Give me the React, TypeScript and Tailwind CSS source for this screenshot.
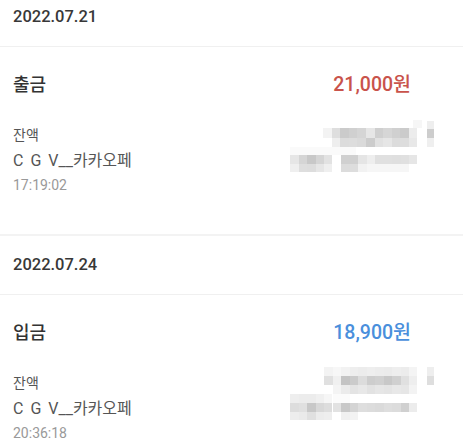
import React from "react";

const FONT = { fontFamily: 'Roboto, "Noto Sans CJK KR", sans-serif' };

type Cell = [number, number, number, number, string]; // x,y,w,h,color

const mosaic1: Cell[] = [
  [133, 5, 9, 8, "#f6f6f6"],
  [147, 6, 7, 8, "#eeeeee"],
  [43, 13, 9, 10, "#f3f3f3"],
  [52, 13, 8, 10, "#dedede"],
  [60, 13, 9, 10, "#cbcbcb"],
  [69, 13, 8, 10, "#d0d0d0"],
  [77, 13, 9, 10, "#d5d5d5"],
  [86, 13, 9, 10, "#e6e6e6"],
  [95, 13, 8, 10, "#cfcfcf"],
  [103, 13, 9, 10, "#d6d6d6"],
  [112, 13, 8, 10, "#d0d0d0"],
  [120, 13, 9, 10, "#cbcbcb"],
  [129, 13, 8, 10, "#ececec"],
  [147, 14, 7, 9, "#cdcdcd"],
  [52, 23, 8, 9, "#eeeeee"],
  [60, 23, 9, 9, "#dcdcdc"],
  [69, 23, 8, 9, "#dddddd"],
  [77, 23, 9, 9, "#dadada"],
  [86, 23, 9, 9, "#cccccc"],
  [95, 23, 8, 9, "#e1e1e1"],
  [103, 23, 9, 9, "#e6e6e6"],
  [112, 23, 8, 9, "#dcdcdc"],
  [120, 23, 9, 9, "#dddddd"],
  [129, 23, 8, 9, "#e8e8e8"],
  [147, 23, 7, 9, "#efefef"],
  [10, 32, 66, 8, "#fafafa"],
  [10, 40, 9, 9, "#e6e6e6"],
  [19, 40, 8, 9, "#d5d5d5"],
  [27, 40, 9, 9, "#c8c8c8"],
  [36, 40, 8, 9, "#d5d5d5"],
  [44, 40, 8, 9, "#e2e2e2"],
  [61, 40, 9, 9, "#d0d0d0"],
  [70, 40, 8, 9, "#d0d0d0"],
  [78, 40, 9, 9, "#e5e5e5"],
  [87, 40, 8, 9, "#eeeeee"],
  [95, 40, 9, 9, "#e0e0e0"],
  [104, 40, 8, 9, "#e0e0e0"],
  [112, 40, 9, 9, "#dfdfdf"],
  [121, 40, 8, 9, "#e0e0e0"],
  [129, 40, 8, 9, "#e6e6e6"],
  [10, 49, 9, 8, "#efefef"],
  [19, 49, 8, 8, "#dedede"],
  [27, 49, 9, 8, "#dddddd"],
  [36, 49, 8, 8, "#e6e6e6"],
  [44, 49, 8, 8, "#efefef"],
  [61, 49, 9, 8, "#dcdcdc"],
  [70, 49, 8, 8, "#dddddd"],
  [78, 49, 9, 8, "#f2f2f2"],
  [87, 49, 42, 8, "#f6f6f6"],
];

const mosaic2: Cell[] = [
  [44, 4, 9, 9, "#f3f3f3"],
  [53, 4, 8, 9, "#f7f7f7"],
  [61, 4, 9, 9, "#f2f2f2"],
  [70, 4, 8, 9, "#eeeeee"],
  [78, 4, 9, 9, "#ececec"],
  [87, 4, 8, 9, "#eeeeee"],
  [95, 4, 9, 9, "#ececec"],
  [104, 4, 8, 9, "#ebebeb"],
  [112, 4, 9, 9, "#eeeeee"],
  [121, 4, 8, 9, "#ececec"],
  [129, 4, 8, 9, "#f4f4f4"],
  [147, 4, 7, 9, "#eeeeee"],
  [44, 13, 9, 9, "#e0e0e0"],
  [53, 13, 8, 9, "#f0f0f0"],
  [61, 13, 9, 9, "#c4c4c4"],
  [70, 13, 8, 9, "#cbcbcb"],
  [78, 13, 9, 9, "#dcdcdc"],
  [87, 13, 8, 9, "#cdcdcd"],
  [95, 13, 9, 9, "#d0d0d0"],
  [104, 13, 8, 9, "#c8c8c8"],
  [112, 13, 9, 9, "#d0d0d0"],
  [121, 13, 8, 9, "#e0e0e0"],
  [129, 13, 8, 9, "#eeeeee"],
  [147, 13, 7, 9, "#dedede"],
  [53, 22, 8, 9, "#f4f4f4"],
  [61, 22, 9, 9, "#ebebeb"],
  [70, 22, 8, 9, "#e4e4e4"],
  [78, 22, 9, 9, "#e8e8e8"],
  [87, 22, 8, 9, "#e2e2e2"],
  [95, 22, 9, 9, "#e6e6e6"],
  [104, 22, 8, 9, "#e4e4e4"],
  [112, 22, 9, 9, "#e8e8e8"],
  [121, 22, 8, 9, "#e6e6e6"],
  [129, 22, 8, 9, "#f3f3f3"],
  [10, 31, 9, 9, "#eeeeee"],
  [19, 31, 8, 9, "#ececec"],
  [27, 31, 9, 9, "#ececec"],
  [36, 31, 8, 9, "#f0f0f0"],
  [44, 31, 8, 9, "#f6f6f6"],
  [53, 31, 17, 9, "#fbfbfb"],
  [10, 40, 9, 9, "#dddddd"],
  [19, 40, 8, 9, "#e0e0e0"],
  [27, 40, 9, 9, "#c8c8c8"],
  [36, 40, 8, 9, "#d8d8d8"],
  [44, 40, 8, 9, "#dddddd"],
  [53, 40, 8, 9, "#e2e2e2"],
  [61, 40, 9, 9, "#c8c8c8"],
  [70, 40, 8, 9, "#d4d4d4"],
  [78, 40, 9, 9, "#dedede"],
  [87, 40, 8, 9, "#dcdcdc"],
  [95, 40, 9, 9, "#dadada"],
  [104, 40, 8, 9, "#dedede"],
  [112, 40, 9, 9, "#dcdcdc"],
  [121, 40, 8, 9, "#d0d0d0"],
  [129, 40, 8, 9, "#ececec"],
  [10, 49, 9, 8, "#ededed"],
  [19, 49, 8, 8, "#eaeaea"],
  [27, 49, 9, 8, "#e0e0e0"],
  [36, 49, 8, 8, "#ececec"],
  [44, 49, 8, 8, "#eeeeee"],
  [61, 49, 9, 8, "#f0f0f0"],
  [70, 49, 8, 8, "#f3f3f3"],
];

function Mosaic({ cells }: { cells: Cell[] }) {
  return (
    <div className="relative h-[58px] w-[160px] shrink-0">
      {cells.map(([x, y, w, h, c], i) => (
        <div
          key={i}
          className="absolute"
          style={{ left: x, top: y, width: w, height: h, background: c }}
        />
      ))}
    </div>
  );
}

function Entry({
  date,
  kind,
  amount,
  amountClass,
  time,
  cells,
  last,
}: {
  date: string;
  kind: string;
  amount: string;
  amountClass: string;
  time: string;
  cells: Cell[];
  last?: boolean;
}) {
  return (
    <section className={last ? "" : "border-b-2 border-[#f3f3f3]"}>
      <div className="flex h-[59px] items-center border-b border-[#f0f0f0] pl-[13px]">
        <span className="text-[16.5px] font-medium text-[#383838]">{date}</span>
      </div>
      <div className="flex items-center justify-between pl-[13px] pr-[52px] pt-[25px]">
        <span className="text-[18px] font-medium text-[#333333] leading-[26px]">{kind}</span>
        <span className={`text-[19.5px] font-medium leading-[26px] ${amountClass}`}>{amount}</span>
      </div>
      <div className="flex items-start justify-between pl-[13px] pr-[23px] pt-[25px] pb-[38px]">
        <div className="flex flex-col">
          <span className="text-[14px] leading-[24px] text-[#555555]">잔액</span>
          <span className="text-[16px] leading-[27px] text-[#555555] [word-spacing:3px]">
            C G V__카카오페
          </span>
          <span className="text-[14px] leading-[22px] text-[#999999]">{time}</span>
        </div>
        <div className="-mt-[8px]">
          <Mosaic cells={cells} />
        </div>
      </div>
    </section>
  );
}

export default function App() {
  return (
    <div className="h-[447px] w-[468px] overflow-hidden bg-white" style={FONT}>
      <div className="-mt-[12px] w-[463px]">
        <Entry
          date="2022.07.21"
          kind="출금"
          amount="21,000원"
          amountClass="text-[#c9534b]"
          time="17:19:02"
          cells={mosaic1}
        />
        <Entry
          date="2022.07.24"
          kind="입금"
          amount="18,900원"
          amountClass="text-[#4a8fdc]"
          time="20:36:18"
          cells={mosaic2}
          last
        />
      </div>
    </div>
  );
}
